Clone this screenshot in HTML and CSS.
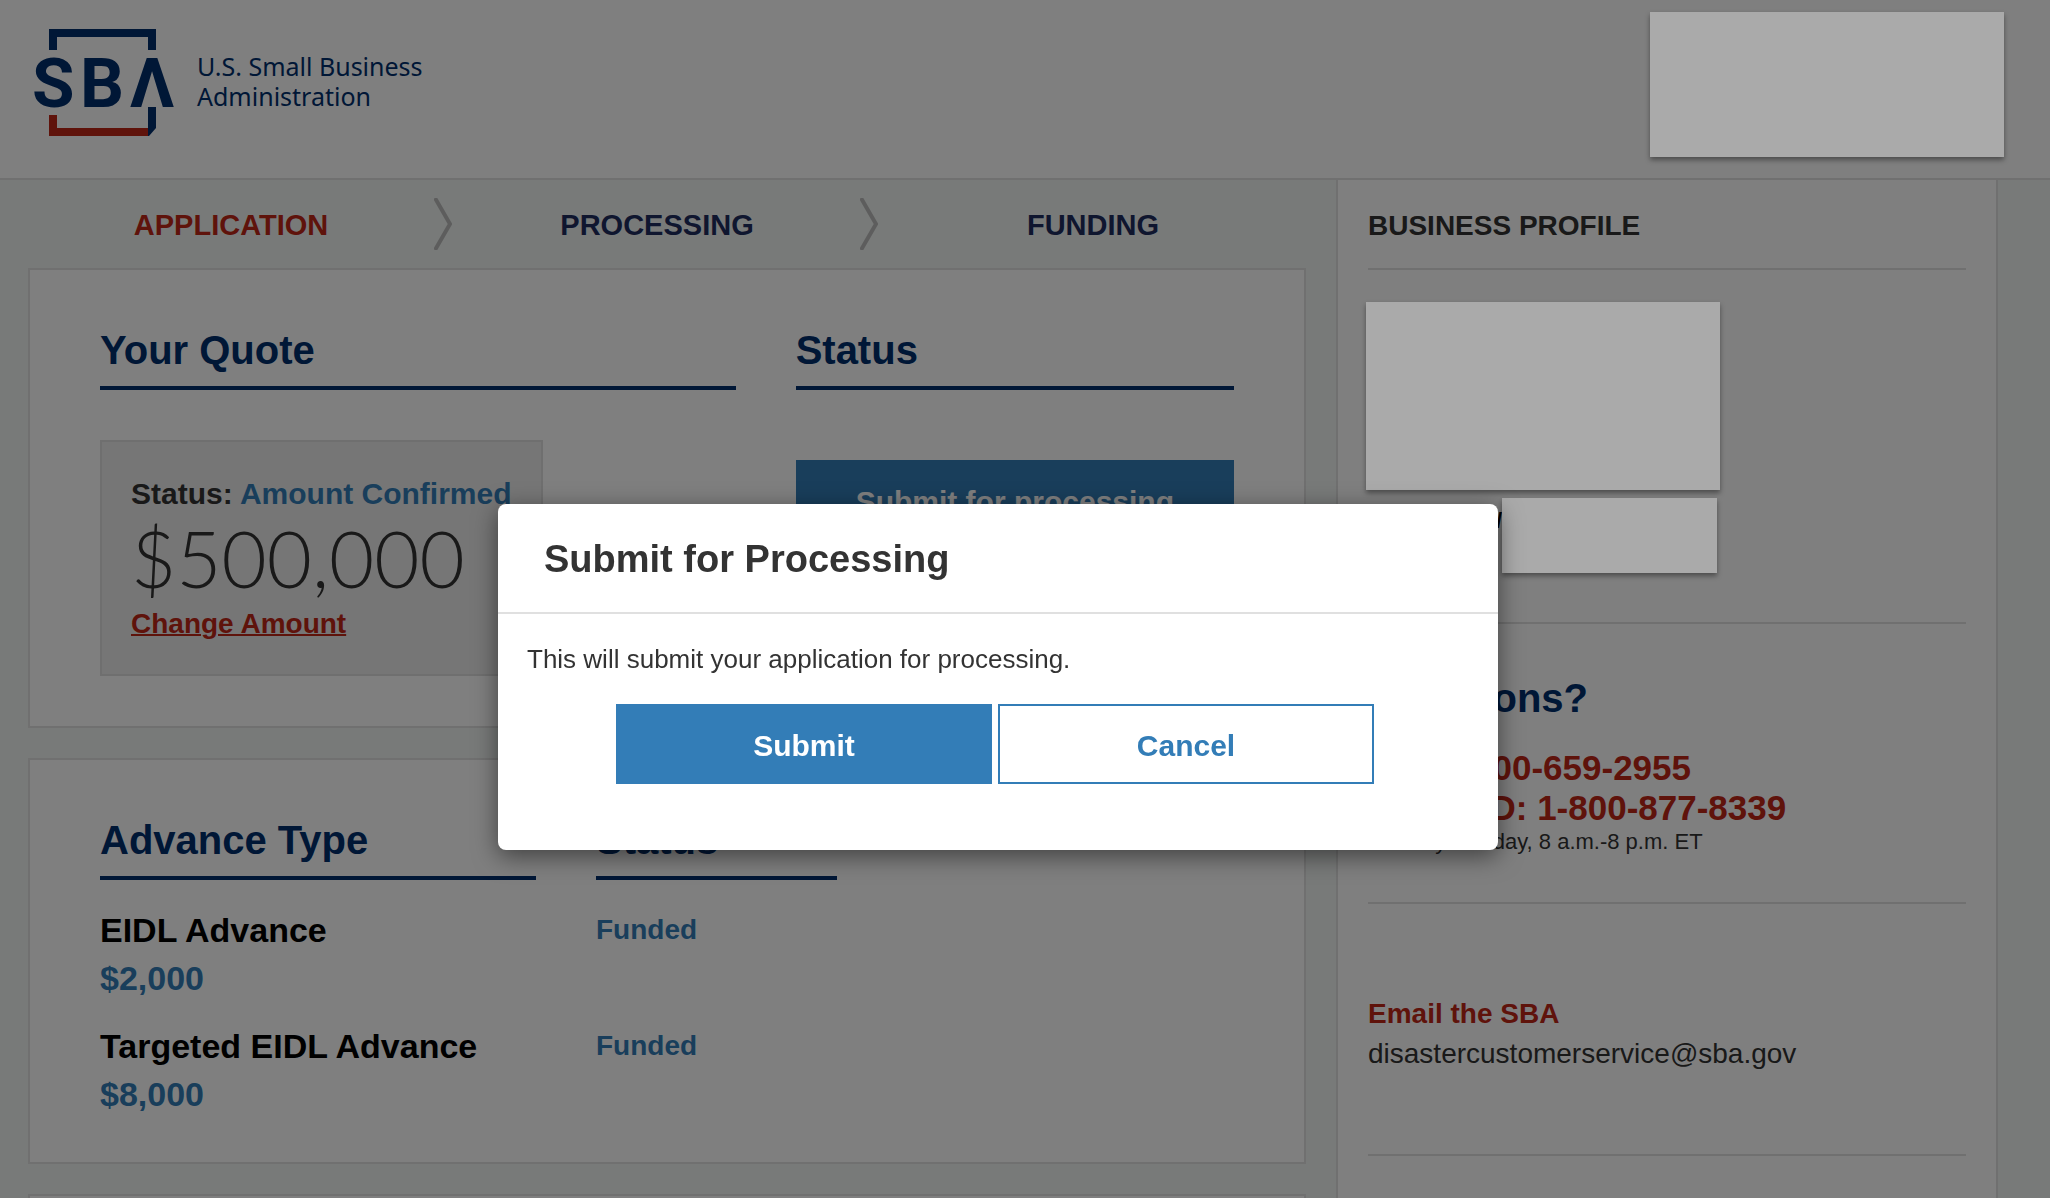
FILE: index.html
```html
<!DOCTYPE html>
<html lang="en">
<head>
    <meta charset="UTF-8">
    <meta name="viewport" content="width=device-width, initial-scale=1.0">
    <title>SBA Application Portal</title>
    <link rel="stylesheet" href="styles.css">
</head>
<body class="modal-open">
    <header class="site-header">
        <a class="brand" href="#">
            <svg class="brand-mark" viewBox="0 0 140 110" role="img" aria-label="SBA">
                <path class="navy" d="M15 0h107v21h-8V8H23v13H15z"/>
                <path class="navy" d="M114 78h8v21l-7 8h-1z"/>
                <path class="red" d="M15 86h8v13h91v8H15z"/>
                <text class="mark-letter" x="-2" y="78">S</text>
                <text class="mark-letter" x="46" y="78">B</text>
                <text class="mark-letter" x="118" y="78" text-anchor="middle">Λ</text>
            </svg>
            <span class="brand-name">U.S. Small Business<br>Administration</span>
        </a>
        <div class="masked masked-account"></div>
    </header>

    <div class="layout">
        <main class="main">
            <ol class="steps">
                <li class="step active">
                    <span>APPLICATION</span>
                    <svg class="chevron" viewBox="0 0 18 52"><path d="M1 0l15 26L1 52"/></svg>
                </li>
                <li class="step">
                    <span>PROCESSING</span>
                    <svg class="chevron" viewBox="0 0 18 52"><path d="M1 0l15 26L1 52"/></svg>
                </li>
                <li class="step"><span>FUNDING</span></li>
            </ol>

            <section class="card quote">
                <div>
                    <h2 class="heading">Your Quote</h2>
                    <div class="quote-box">
                        <p class="quote-status">Status: <span>Amount Confirmed</span></p>
                        <p class="quote-amount">$500,000</p>
                        <a class="quote-change" href="#">Change Amount</a>
                    </div>
                </div>
                <div>
                    <h2 class="heading">Status</h2>
                    <button class="btn btn-block" type="button">Submit for processing</button>
                </div>
            </section>

            <section class="card">
                <table class="advances">
                    <thead>
                        <tr>
                            <th><div class="heading">Advance Type</div></th>
                            <th><div class="heading">Status</div></th>
                        </tr>
                    </thead>
                    <tbody>
                        <tr>
                            <td>EIDL Advance<div class="advance-amount">$2,000</div></td>
                            <td class="advance-status">Funded</td>
                        </tr>
                        <tr>
                            <td>Targeted EIDL Advance<div class="advance-amount">$8,000</div></td>
                            <td class="advance-status">Funded</td>
                        </tr>
                    </tbody>
                </table>
            </section>

            <section class="card"></section>
        </main>

        <aside class="sidebar">
            <h3 class="sidebar-title">BUSINESS PROFILE</h3>

            <div class="profile">
                <div class="masked masked-profile"></div>
                <div class="profile-row">
                    <span class="profile-label">/</span>
                    <div class="masked masked-value"></div>
                </div>
            </div>

            <div class="questions">
                <h2>Questions?</h2>
                <a class="phone" href="tel:18006592955">Call 1-800-659-2955</a>
                <a class="phone" href="tel:18008778339">TTY/TDD: 1-800-877-8339</a>
                <p class="hours">Monday-Sunday, 8 a.m.-8 p.m. ET</p>
            </div>

            <div class="email">
                <h4>Email the SBA</h4>
                <a href="mailto:disastercustomerservice@sba.gov">disastercustomerservice@sba.gov</a>
            </div>
        </aside>
    </div>

    <div class="backdrop"></div>
    <div class="modal-wrap">
        <div class="modal" role="dialog" aria-modal="true" aria-labelledby="modal-title">
            <h2 class="modal-title" id="modal-title">Submit for Processing</h2>
            <div class="modal-body">
                <p>This will submit your application for processing.</p>
                <div class="modal-actions">
                    <button class="btn" type="button">Submit</button>
                    <button class="btn btn-outline" type="button">Cancel</button>
                </div>
            </div>
        </div>
    </div>
</body>
</html>
```
FILE: styles.css
```css
:root {
    --navy: #002e6d;
    --red: #bf2616;
    --blue: #337db7;
    --text: #333333;
    --border: #e0e0e0;
    --page: #f0f5f2;
}

* {
    box-sizing: border-box;
}

body {
    margin: 0;
    background: var(--page);
    color: var(--text);
    font-family: "Liberation Sans", Arial, sans-serif;
    font-size: 28px;
}

body.modal-open {
    height: 100vh;
    overflow: hidden;
}

h2, h3, h4, p, ol {
    margin: 0;
    padding: 0;
}

a {
    color: inherit;
    text-decoration: none;
}

/* Header */
.site-header {
    display: flex;
    justify-content: space-between;
    align-items: flex-start;
    height: 180px;
    padding: 12px 46px 0 34px;
    background: #fff;
    border-bottom: 2px solid var(--border);
}

.brand {
    display: flex;
    align-items: flex-start;
    gap: 23px;
    padding-top: 17px;
}

.brand-mark {
    width: 140px;
    height: 110px;
    overflow: visible;
}

.brand-mark .navy,
.mark-letter {
    fill: var(--navy);
}

.brand-mark .red {
    fill: var(--red);
}

.mark-letter {
    font-family: Roboto, sans-serif;
    font-size: 69px;
    font-weight: bold;
}

.brand-name {
    padding-top: 22px;
    color: var(--navy);
    font-family: "Noto Sans", sans-serif;
    font-size: 25px;
    line-height: 30px;
}

/* Account and profile details hidden from view */
.masked {
    position: relative;
    z-index: 20;
    background: #aaaaaa;
    box-shadow: 0 3px 5px rgba(0, 0, 0, 0.4);
}

.masked-account {
    width: 354px;
    height: 145px;
}

.masked-profile {
    width: 354px;
    height: 188px;
    margin-left: -2px;
}

.masked-value {
    width: 215px;
    height: 75px;
}

/* Layout */
.layout {
    display: grid;
    grid-template-columns: 1fr 662px;
    margin-right: 52px;
}

.main {
    padding: 0 30px 30px 28px;
}

.steps {
    display: flex;
    height: 88px;
    list-style: none;
}

.step {
    flex: 1;
    display: flex;
    align-items: center;
    color: #1f2c5e;
    font-size: 29px;
    font-weight: bold;
}

.step.active {
    color: var(--red);
}

.step span {
    flex: 1;
    padding-top: 2px;
    text-align: center;
}

.chevron {
    width: 18px;
    height: 52px;
    margin-right: 2px;
}

.chevron path {
    fill: none;
    stroke: #bbbbbb;
    stroke-width: 4;
}

.card {
    padding: 58px 70px 44px;
    margin-bottom: 30px;
    background: #fff;
    border: 2px solid var(--border);
}

.heading {
    padding-bottom: 14px;
    border-bottom: 4px solid var(--navy);
    color: var(--navy);
    font-size: 40px;
    line-height: 44px;
    font-weight: bold;
}

/* Quote */
.quote {
    display: grid;
    grid-template-columns: 1.45fr 1fr;
    gap: 60px;
}

.quote-box {
    display: inline-block;
    margin: 50px 0 6px;
    padding: 34px 29px 38px;
    background: #ededed;
    border: 2px solid #dedede;
    vertical-align: top;
}

.quote-status {
    font-size: 30px;
    line-height: 36px;
    font-weight: bold;
}

.quote-status span {
    color: var(--blue);
}

.quote-amount {
    margin-bottom: 8px;
    font-family: Lato, sans-serif;
    font-size: 78px;
    line-height: 92px;
    font-weight: 300;
}

.quote-change {
    display: block;
    color: var(--red);
    line-height: 24px;
    font-weight: bold;
    text-decoration: underline;
    text-decoration-thickness: 2px;
}

.btn {
    height: 80px;
    padding-top: 4px;
    background: var(--blue);
    border: 2px solid var(--blue);
    color: #fff;
    font-family: inherit;
    font-size: 30px;
    font-weight: bold;
    cursor: pointer;
}

.btn-outline {
    background: #fff;
    color: var(--blue);
}

.btn-block {
    width: 100%;
    margin-top: 70px;
}

/* Advances */
.advances {
    width: 65%;
    table-layout: fixed;
    border-collapse: collapse;
    text-align: left;
}

.advances th {
    padding: 0 0 6px;
}

.advances th:first-child {
    width: 496px;
    padding-right: 60px;
}

.advances td {
    padding: 20px 0 0;
    color: #000;
    font-size: 34px;
    line-height: 48px;
    font-weight: bold;
    vertical-align: top;
}

.advances .advance-amount {
    color: var(--blue);
}

.advances .advance-status {
    color: var(--blue);
    font-size: 28px;
}

/* Sidebar */
.sidebar {
    padding: 0 30px;
    background: #fff;
    border: solid var(--border);
    border-width: 0 2px;
}

.sidebar-title {
    padding: 30px 0 26px;
    border-bottom: 2px solid var(--border);
    font-size: 28px;
    line-height: 32px;
}

.profile {
    padding: 32px 0 49px;
    border-bottom: 2px solid var(--border);
}

.profile-row {
    display: flex;
    margin-top: 8px;
}

.profile-label {
    width: 134px;
    padding-top: 12px;
    color: #000;
    font-size: 22px;
    line-height: 22px;
    font-weight: bold;
    text-align: right;
}

.questions {
    padding: 52px 0 46px;
    border-bottom: 2px solid var(--border);
}

.questions h2 {
    margin-bottom: 28px;
    color: var(--navy);
    font-size: 40px;
    line-height: 44px;
}

.phone {
    display: block;
    color: var(--red);
    font-size: 35px;
    line-height: 40px;
    font-weight: bold;
}

.hours {
    font-size: 22px;
    line-height: 28px;
}

.email {
    padding: 90px 0 80px;
    border-bottom: 2px solid var(--border);
    line-height: 40px;
}

.email h4 {
    color: var(--red);
}

/* Modal */
.backdrop {
    position: fixed;
    inset: 0;
    z-index: 10;
    background: rgba(0, 0, 0, 0.5);
}

.modal-wrap {
    position: fixed;
    inset: 0;
    z-index: 30;
    display: flex;
    justify-content: center;
    align-items: flex-start;
    padding: 504px 54px 0 0;
}

.modal {
    width: 1000px;
    background: #fff;
    border-radius: 8px;
    box-shadow: 0 6px 24px rgba(0, 0, 0, 0.5);
}

.modal-title {
    padding: 33px 46px 31px;
    border-bottom: 2px solid var(--border);
    font-size: 38px;
    line-height: 44px;
}

.modal-body {
    padding: 27px 29px 66px;
    font-size: 26px;
    line-height: 36px;
}

.modal-actions {
    display: flex;
    justify-content: center;
    gap: 6px;
    margin-top: 27px;
    padding-right: 6px;
}

.modal-actions .btn {
    width: 376px;
}
```
